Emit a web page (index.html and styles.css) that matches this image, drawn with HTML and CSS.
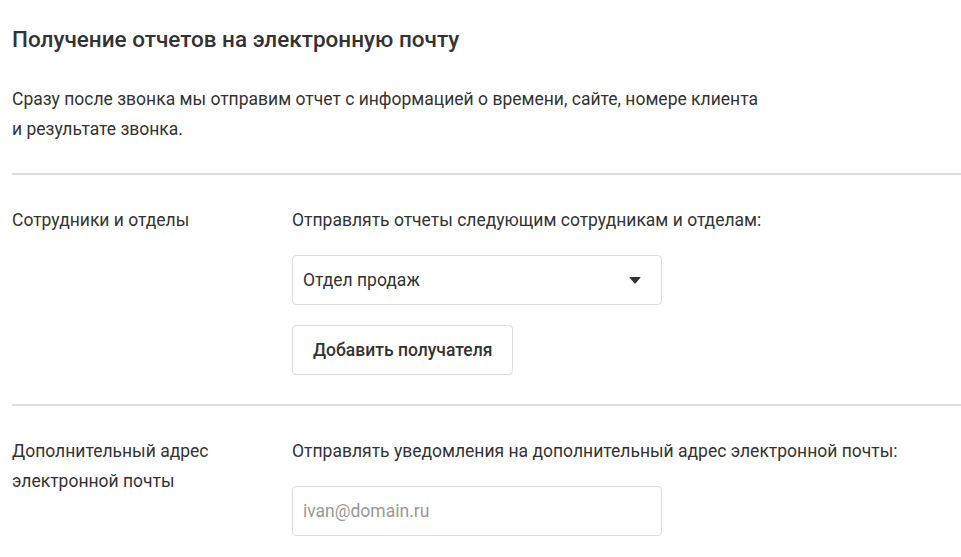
FILE: index.html
```html
<!DOCTYPE html>
<html lang="ru">
<head>
<meta charset="utf-8">
<link rel="stylesheet" href="styles.css">
</head>
<body>
<div class="page">
  <h1 class="title">Получение отчетов на электронную почту</h1>
  <p class="intro">Сразу после звонка мы отправим отчет с информацией о времени, сайте, номере клиента<br>и результате звонка.</p>
  <div class="divider"></div>
  <div class="row">
    <div class="label">Сотрудники и отделы</div>
    <div class="field">
      <div class="field-text">Отправлять отчеты следующим сотрудникам и отделам:</div>
      <div class="select">
        <span>Отдел продаж</span>
        <svg class="caret" width="12" height="7" viewBox="0 0 12 7"><path d="M1 0 H11 Q12 0 11.3 0.8 L6.7 6.2 Q6 7 5.3 6.2 L0.7 0.8 Q0 0 1 0 Z" fill="#333"/></svg>
      </div>
      <button class="btn">Добавить получателя</button>
    </div>
  </div>
  <div class="divider"></div>
  <div class="row">
    <div class="label">Дополнительный адрес<br>электронной почты</div>
    <div class="field">
      <div class="field-text">Отправлять уведомления на дополнительный адрес электронной почты:</div>
      <input class="input" type="text" placeholder="ivan@domain.ru">
    </div>
  </div>
</div>
</body>
</html>
```

FILE: styles.css
```css
html, body {
  margin: 0;
  padding: 0;
  background: #fff;
}
body {
  font-family: Roboto, "Liberation Sans", sans-serif;
  color: #333;
  font-size: 17.5px;
  line-height: 30px;
}
.page {
  padding: 24px 0 0 12px;
}
.title {
  margin: 0;
  font-size: 22.5px;
  font-weight: 500;
  line-height: 30px;
  color: #333;
}
.intro {
  margin: 30px 0 0;
  color: #333;
}
.divider {
  height: 2px;
  background: #ddd;
  margin-top: 29px;
}
.row {
  display: flex;
  padding-top: 30px;
}
.label {
  width: 280px;
  flex: none;
}
.field {
  display: flex;
  flex-direction: column;
  align-items: flex-start;
}
.field-text {
  margin-bottom: 20px;
}
.select {
  box-sizing: border-box;
  width: 370px;
  height: 50px;
  border: 1px solid #ddd;
  border-radius: 4px;
  display: flex;
  align-items: center;
  justify-content: space-between;
  padding: 0 20px 0 10px;
  color: #333;
}
.caret {
  display: block;
}
.btn {
  box-sizing: border-box;
  margin-top: 20px;
  height: 50px;
  padding: 0 20px;
  border: 1px solid #ddd;
  border-radius: 4px;
  background: #fff;
  font-family: inherit;
  font-size: 17.5px;
  font-weight: 500;
  color: #333;
}
.input {
  box-sizing: border-box;
  width: 370px;
  height: 50px;
  border: 1px solid #ddd;
  border-radius: 4px;
  padding: 0 10px;
  font-family: inherit;
  font-size: 17.5px;
  color: #333;
  outline: none;
}
.input::placeholder {
  color: #999;
}
```
